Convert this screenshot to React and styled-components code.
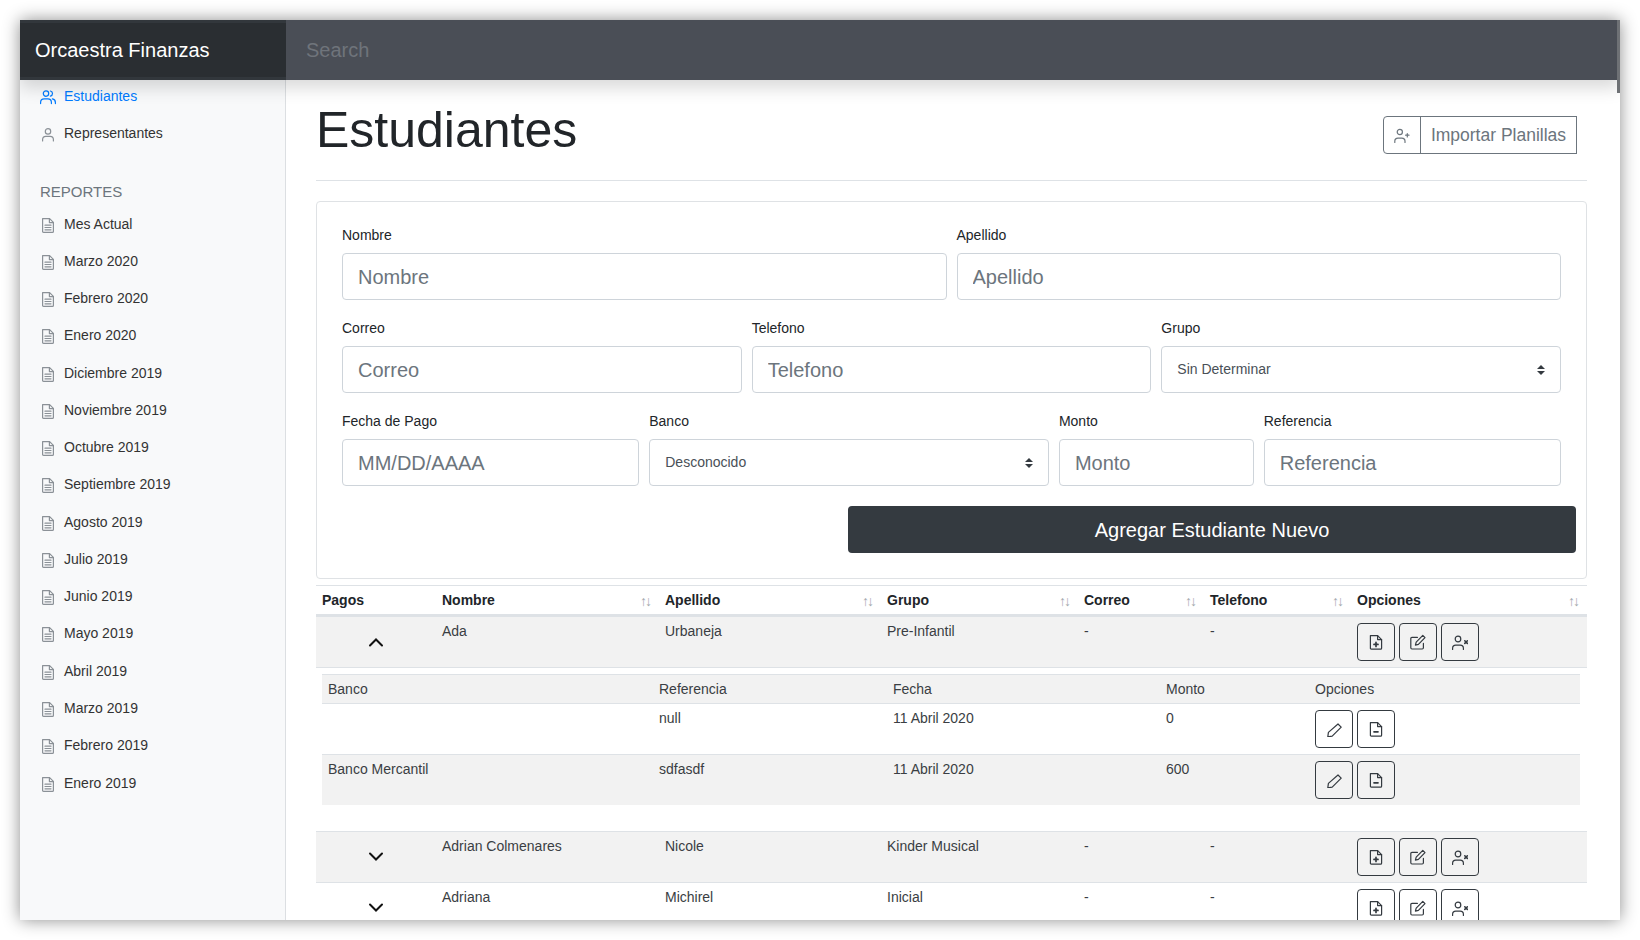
import styled, { createGlobalStyle } from "styled-components"

const GlobalStyle = createGlobalStyle`
	* { box-sizing: border-box; }
	html, body { margin: 0; background: #fff; height: 100%; overflow: hidden; }
	body {
		font-family: "Liberation Sans", Arial, sans-serif;
		font-size: 14px;
		line-height: 1.5;
		color: #212529;
	}
`

const reportes = [
	"Mes Actual", "Marzo 2020", "Febrero 2020", "Enero 2020", "Diciembre 2019", "Noviembre 2019",
	"Octubre 2019", "Septiembre 2019", "Agosto 2019", "Julio 2019", "Junio 2019", "Mayo 2019",
	"Abril 2019", "Marzo 2019", "Febrero 2019", "Enero 2019",
]

const columnas = [
	{ name: "Pagos", width: 120 },
	{ name: "Nombre", width: 223, sort: true },
	{ name: "Apellido", width: 222, sort: true },
	{ name: "Grupo", width: 197, sort: true },
	{ name: "Correo", width: 126, sort: true },
	{ name: "Telefono", width: 147, sort: true },
	{ name: "Opciones", width: 236, sort: true },
]

const Svg = ({ size = 16, children, color = "currentColor", width = 1.2 }) => (
	<svg width={size} height={size} viewBox="0 0 16 16" fill="none" stroke={color} strokeWidth={width} strokeLinecap="round" strokeLinejoin="round">
		{children}
	</svg>
)

const UsersIcon = () => (
	<Svg>
		<circle cx="6" cy="4.6" r="2.7" />
		<path d="M.6 14.600v-1.200c0-2.400 1.800-3.600 3.600-3.600h3.600c1.800 0 3.600 1.200 3.600 3.600v1.200" />
		<path d="M10.400 2c1.300.3 2.100 1.300 2.100 2.600s-.8 2.300-2.100 2.600" />
		<path d="M12.400 9.900c1.800.3 3 1.600 3 3.500v1.200" />
	</Svg>
)
const UserIcon = () => (
	<Svg>
		<circle cx="8" cy="5.400" r="2.700" />
		<path d="M2.600 15v-1.400c0-2 1.500-3.200 3.200-3.200h4.400c1.700 0 3.200 1.200 3.200 3.200V15" />
	</Svg>
)
const DocIcon = () => (
	<Svg>
		<path d="M2.600 1.600h7l3.800 3.800v9c0 .6-.4 1-1 1H3.600c-.6 0-1-.4-1-1z" />
		<path d="M9.400 1.600v4h4" />
		<path d="M5 8.200h6M5 10.500h6M5 12.800h6" />
	</Svg>
)
const UserPlusIcon = () => (
	<Svg>
		<circle cx="5.800" cy="5" r="2.600" />
		<path d="M.8 15.400v-1.200c0-1.900 1.500-3.100 3.200-3.100h3.800c1.700 0 3.200 1.200 3.200 3.100v1.200" />
		<path d="M11.600 8.200h3.400M13.300 6.500v3.400" />
	</Svg>
)
const UserXIcon = () => (
	<Svg>
		<circle cx="6" cy="5" r="2.800" />
		<path d="M.6 15.400v-1.200c0-1.900 1.500-3.100 3.200-3.100h4.400c1.700 0 3.200 1.200 3.200 3.100v1.200" />
		<path d="M12.800 6.800l2.600 2.600M15.400 6.800l-2.600 2.600" strokeWidth="1.600" />
	</Svg>
)
const FilePlusIcon = () => (
	<Svg>
		<path d="M2.400 1.600h7.200L13.600 5.600v8.600c0 .6-.4 1-1 1H3.400c-.6 0-1-.4-1-1z" />
		<path d="M9.600 1.600v4h4" />
		<path d="M8 8.400v4M6 10.400h4" strokeWidth="1.700" />
	</Svg>
)
const FileMinusIcon = () => (
	<Svg>
		<path d="M2.400 1.600h7.200L13.600 5.600v8.600c0 .6-.4 1-1 1H3.400c-.6 0-1-.4-1-1z" />
		<path d="M9.600 1.600v4h4" />
		<path d="M6 10.800h4" strokeWidth="1.700" />
	</Svg>
)
const EditIcon = () => (
	<Svg>
		<path d="M13.400 9.400v4.400c0 .7-.5 1.200-1.200 1.200H2c-.7 0-1.200-.5-1.200-1.200V4.600c0-.7.5-1.200 1.200-1.200h5.400" />
		<path d="M12.800 1.400l2.200 2.200-6.600 6.800-3 .8.800-3z" />
	</Svg>
)
const PencilIcon = () => (
	<Svg>
		<path d="M12 3l3.200 3.200-9 9-4.400.6.6-4.400z" />
	</Svg>
)
const ChevronIcon = ({ up }) => (
	<svg width="16" height="10" viewBox="0 0 16 10" fill="none" stroke="#111" strokeWidth="2" strokeLinecap="round">
		<path d={up ? "M2 8.500l6-6 6 6" : "M2 1.500l6 6 6-6"} />
	</svg>
)

function Opciones() {
	return (
		<Buttons>
			<IconButton><FilePlusIcon /></IconButton>
			<IconButton><EditIcon /></IconButton>
			<IconButton><UserXIcon /></IconButton>
		</Buttons>
	)
}

function Fila({ nombre, apellido, grupo, abierto, striped, first }) {
	return (
		<Row $striped={striped} $first={first}>
			<ChevronTd><ChevronIcon up={abierto} /></ChevronTd>
			<Td>{nombre}</Td>
			<Td>{apellido}</Td>
			<Td>{grupo}</Td>
			<Td>-</Td>
			<Td>-</Td>
			<OptionTd><Opciones /></OptionTd>
		</Row>
	)
}

function Pago({ banco, referencia, monto, striped }) {
	return (
		<Row $striped={striped}>
			<Td>{banco}</Td>
			<Td>{referencia}</Td>
			<Td>11 Abril 2020</Td>
			<Td>{monto}</Td>
			<OptionTd>
				<Buttons>
					<IconButton><PencilIcon /></IconButton>
					<IconButton><FileMinusIcon /></IconButton>
				</Buttons>
			</OptionTd>
		</Row>
	)
}

function App() {
	return (
		<Shell>
			<GlobalStyle />
			<Navbar>
				<Brand>Orcaestra Finanzas</Brand>
				<Search placeholder="Search" />
			</Navbar>
			<Scrollbar />
			<Body>
				<Sidebar>
					<NavList>
						<NavItem $active><UsersIcon />Estudiantes</NavItem>
						<NavItem><UserIcon />Representantes</NavItem>
					</NavList>
					<SideHeading>REPORTES</SideHeading>
					<NavList>
						{reportes.map((r) => <NavItem key={r}><DocIcon />{r}</NavItem>)}
					</NavList>
				</Sidebar>
				<Main>
					<Header>
						<Title>Estudiantes</Title>
						<ImportGroup>
							<ImportIcon><UserPlusIcon /></ImportIcon>
							<ImportLabel>Importar Planillas</ImportLabel>
						</ImportGroup>
					</Header>
					<Card>
						<FormGrid>
							<Field $span={6}><label>Nombre</label><Input placeholder="Nombre" /></Field>
							<Field $span={6}><label>Apellido</label><Input placeholder="Apellido" /></Field>
							<Field $span={4}><label>Correo</label><Input placeholder="Correo" /></Field>
							<Field $span={4}><label>Telefono</label><Input placeholder="Telefono" /></Field>
							<Field $span={4}>
								<label>Grupo</label>
								<Select defaultValue="Sin Determinar"><option>Sin Determinar</option></Select>
							</Field>
							<Field $span={3}><label>Fecha de Pago</label><Input placeholder="MM/DD/AAAA" /></Field>
							<Field $span={4}>
								<label>Banco</label>
								<Select defaultValue="Desconocido"><option>Desconocido</option></Select>
							</Field>
							<Field $span={2}><label>Monto</label><Input placeholder="Monto" /></Field>
							<Field $span={3}><label>Referencia</label><Input placeholder="Referencia" /></Field>
						</FormGrid>
						<SubmitRow>
							<Submit>Agregar Estudiante Nuevo</Submit>
						</SubmitRow>
					</Card>
					<Table>
						<colgroup>
							{columnas.map((c) => <col key={c.name} style={{ width: c.width }} />)}
						</colgroup>
						<thead>
							<tr>
								{columnas.map((c) => (
									<Th key={c.name}>
										<ThInner>{c.name}{c.sort && <SortArrows>↑↓</SortArrows>}</ThInner>
									</Th>
								))}
							</tr>
						</thead>
						<tbody>
							<Fila nombre="Ada" apellido="Urbaneja" grupo="Pre-Infantil" abierto striped first />
							<tr>
								<DetailCell colSpan={7}>
									<SubTable>
										<colgroup>
											<col style={{ width: 331 }} />
											<col style={{ width: 234 }} />
											<col style={{ width: 273 }} />
											<col style={{ width: 149 }} />
											<col />
										</colgroup>
										<thead>
											<SubHead>
												<td>Banco</td>
												<td>Referencia</td>
												<td>Fecha</td>
												<td>Monto</td>
												<td>Opciones</td>
											</SubHead>
										</thead>
										<tbody>
											<Pago banco="" referencia="null" monto="0" />
											<Pago banco="Banco Mercantil" referencia="sdfasdf" monto="600" striped />
										</tbody>
									</SubTable>
								</DetailCell>
							</tr>
							<Fila nombre="Adrian Colmenares" apellido="Nicole" grupo="Kinder Musical" striped />
							<Fila nombre="Adriana" apellido="Michirel" grupo="Inicial" />
						</tbody>
					</Table>
				</Main>
			</Body>
		</Shell>
	)
}

export default App

const Shell = styled.div`
	position: relative;
	width: 1600px;
	height: 900px;
	margin: 20px;
	display: flex;
	flex-direction: column;
	overflow: hidden;
	background: #fff;
	box-shadow: 0 0 16px rgba(0, 0, 0, 0.45);
`

const Navbar = styled.nav`
	position: relative;
	z-index: 2;
	flex: 0 0 60px;
	display: flex;
	background: #4a4e56;
	box-shadow: 0 8px 16px rgba(0, 0, 0, 0.15);
`

const Brand = styled.div`
	flex: 0 0 266px;
	padding-left: 15px;
	display: flex;
	align-items: center;
	font-size: 20px;
	color: #fff;
	background: #2a2e32;
	box-shadow: inset 0 3px 0 #32373c, inset 0 -3px 0 #32373c;
`

const Search = styled.input`
	flex: 1;
	border: 0;
	outline: 0;
	background: transparent;
	padding: 0 20px;
	font: inherit;
	font-size: 20px;
	color: #fff;
	&::placeholder { color: #6f747b; opacity: 1; }
`

const Scrollbar = styled.div`
	position: absolute;
	z-index: 3;
	top: 0;
	right: 0;
	width: 3px;
	height: 73px;
	background: #6e7175;
`

const Body = styled.div`
	flex: 1;
	min-height: 0;
	display: flex;
`

const Sidebar = styled.aside`
	flex: 0 0 266px;
	background: #f8f9fa;
	border-right: 1px solid #dcdfe2;
	overflow: hidden;
`

const NavList = styled.ul`
	list-style: none;
	margin: -2px 0 0;
	padding: 0;
`

const NavItem = styled.li`
	height: 37.27px;
	padding: 8px 0 0 20px;
	display: flex;
	align-items: flex-start;
	gap: 8px;
	line-height: 21px;
	color: ${(p) => (p.$active ? "#007bff" : "#333")};
	svg {
		flex: none;
		margin-top: 3px;
		color: ${(p) => (p.$active ? "#007bff" : "#8b9197")};
	}
`

const SideHeading = styled.h6`
	margin: 0;
	padding: 28px 0 5px 20px;
	font-size: 15px;
	font-weight: 400;
	line-height: 22px;
	color: #6c757d;
`

const Main = styled.main`
	flex: 1;
	min-width: 0;
	padding: 0 33px 0 30px;
	overflow: hidden;
`

const Header = styled.div`
	height: 101px;
	display: flex;
	justify-content: space-between;
	align-items: flex-start;
	padding: 20px 10px 0 0;
	border-bottom: 1px solid #dee2e6;
`

const Title = styled.h1`
	margin: 0;
	font-size: 50px;
	font-weight: 400;
	line-height: 1.2;
	color: #212529;
`

const ImportGroup = styled.div`
	display: flex;
	height: 38px;
	margin-top: 16px;
	color: #6c757d;
`

const ImportIcon = styled.span`
	width: 38px;
	display: flex;
	align-items: center;
	justify-content: center;
	border: 1px solid #6c757d;
	border-radius: 4px 0 0 4px;
`

const ImportLabel = styled.span`
	width: 157px;
	margin-left: -1px;
	display: flex;
	align-items: center;
	justify-content: center;
	border: 1px solid #6c757d;
	font-size: 17.5px;
`

const Card = styled.section`
	margin-top: 20px;
	height: 378px;
	padding: 23px 25px 0;
	border: 1px solid #dfe2e5;
	border-radius: 4px;
`

const FormGrid = styled.div`
	display: grid;
	grid-template-columns: repeat(12, 1fr);
	column-gap: 10px;
	row-gap: 18px;
`

const Field = styled.div`
	grid-column: span ${(p) => p.$span};
	label {
		display: block;
		height: 21px;
		margin-bottom: 7px;
		line-height: 21px;
	}
`

const Input = styled.input`
	display: block;
	width: 100%;
	height: 47px;
	padding: 2px 15px 0;
	border: 1px solid #ced4da;
	border-radius: 4px;
	outline: 0;
	font: inherit;
	font-size: 20px;
	color: #495057;
	&::placeholder { color: #6c757d; opacity: 1; }
`

const Select = styled.select`
	display: block;
	width: 100%;
	height: 47px;
	padding: 0 32px 0 15px;
	border: 1px solid #ced4da;
	border-radius: 4px;
	outline: 0;
	appearance: none;
	font: inherit;
	font-size: 14px;
	color: #495057;
	background: #fff url("data:image/svg+xml,%3csvg xmlns='http://www.w3.org/2000/svg' width='8' height='10' viewBox='0 0 4 5'%3e%3cpath fill='%23343a40' d='M2 0L0 2h4zm0 5L0 3h4z'/%3e%3c/svg%3e") no-repeat right 15px center;
`

const SubmitRow = styled.div`
	display: flex;
	justify-content: flex-end;
	margin: 20px -15px 0 0;
`

const Submit = styled.button`
	width: 728px;
	height: 47px;
	border: 0;
	border-radius: 4px;
	background: #343a40;
	color: #fff;
	font: inherit;
	font-size: 20px;
`

const Table = styled.table`
	width: 100%;
	margin-top: 6px;
	table-layout: fixed;
	border-collapse: separate;
	border-spacing: 0;
`

const Th = styled.th`
	padding: 4px 6px 3px;
	border-top: 1px solid #dee2e6;
	border-bottom: 3px solid #dee2e6;
	text-align: left;
	font-weight: 700;
`

const ThInner = styled.div`
	display: flex;
	justify-content: space-between;
	align-items: center;
`

const SortArrows = styled.span`
	margin-right: 3px;
	font-size: 14px;
	line-height: 1;
	font-weight: 400;
	letter-spacing: -2px;
	color: #a4a9ae;
`

const Row = styled.tr`
	background: ${(p) => (p.$striped ? "#f2f2f2" : "transparent")};
	> td { border-top: ${(p) => (p.$first ? "0" : "1px solid #dee2e6")}; }
`

const Td = styled.td`
	padding: 4px 6px;
	vertical-align: top;
	color: #3a3e43;
`

const ChevronTd = styled.td`
	padding: 20px 0 0;
	vertical-align: top;
	text-align: center;
	line-height: 0;
`

const OptionTd = styled.td`
	padding: 6px;
	vertical-align: top;
`

const Buttons = styled.div`
	display: flex;
	gap: 4px;
`

const IconButton = styled.button`
	width: 38px;
	height: 38px;
	padding: 0;
	display: flex;
	align-items: center;
	justify-content: center;
	background: transparent;
	border: 1px solid #343a40;
	border-radius: 4px;
	color: #343a40;
`

const DetailCell = styled.td`
	padding: 6px 7px 26px 6px;
	border-top: 1px solid #dee2e6;
`

const SubTable = styled.table`
	width: 100%;
	table-layout: fixed;
	border-collapse: separate;
	border-spacing: 0;
`

const SubHead = styled.tr`
	background: #f2f2f2;
	td {
		height: 29px;
		border-top: 1px solid #dee2e6;
		padding: 3px 6px;
		color: #3a3e43;
	}
`
